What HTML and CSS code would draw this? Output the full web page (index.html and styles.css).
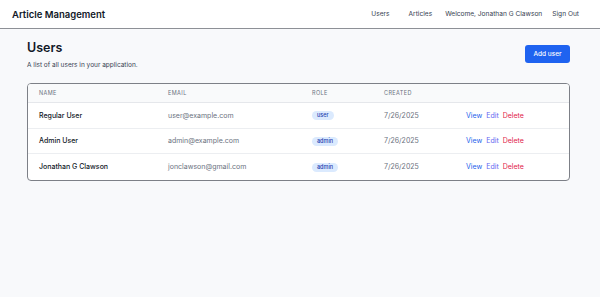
FILE: index.html
```html
<!DOCTYPE html>
<html>
<head>
<meta charset="utf-8">
<link rel="stylesheet" href="styles.css">
</head>
<body>
<header class="topbar">
  <div class="brand">Article Management</div>
  <nav class="nav">
    <a class="nav-link nav-users">Users</a>
    <a class="nav-link nav-articles">Articles</a>
    <span class="nav-welcome">Welcome, Jonathan G Clawson</span>
    <a class="nav-link">Sign Out</a>
  </nav>
</header>
<main class="main">
  <div class="page-head">
    <div>
      <h1 class="title">Users</h1>
      <p class="subtitle">A list of all users in your application.</p>
    </div>
    <button class="add-btn">Add user</button>
  </div>
  <div class="card">
    <div class="row head-row">
      <div>Name</div><div>Email</div><div>Role</div><div>Created</div><div></div>
    </div>
    <div class="row body-row">
      <div class="name">Regular User</div><div class="muted">user@example.com</div><div><span class="badge">user</span></div><div class="muted">7/26/2025</div>
      <div class="actions"><a class="view">View</a><a class="edit">Edit</a><a class="del">Delete</a></div>
    </div>
    <div class="row body-row">
      <div class="name">Admin User</div><div class="muted">admin@example.com</div><div><span class="badge">admin</span></div><div class="muted">7/26/2025</div>
      <div class="actions"><a class="view">View</a><a class="edit">Edit</a><a class="del">Delete</a></div>
    </div>
    <div class="row body-row">
      <div class="name">Jonathan G Clawson</div><div class="muted">jonclawson@gmail.com</div><div><span class="badge">admin</span></div><div class="muted">7/26/2025</div>
      <div class="actions"><a class="view">View</a><a class="edit">Edit</a><a class="del">Delete</a></div>
    </div>
  </div>
</main>
</body>
</html>
```

FILE: styles.css
```css
* { box-sizing: border-box; }
html, body { margin: 0; padding: 0; }
body {
  background: #f8f9fb;
  font-family: Inter, "Noto Sans", sans-serif;
  color: #111827;
  height: 297px;
  overflow: hidden;
}
.topbar {
  height: 29px;
  background: #ffffff;
  border-bottom: 1px solid #8d9096;
  display: flex;
  align-items: center;
  justify-content: space-between;
  padding: 0 21px 0 12px;
}
.brand {
  font-size: 9.5px;
  font-weight: 600;
  color: #111827;
}
.nav {
  display: flex;
  align-items: center;
  font-size: 6.6px;
  color: #374151;
}
.nav-link { color: #374151; }
.nav-users { margin-right: 19px; }
.nav-articles { margin-right: 13px; }
.nav-welcome { margin-right: 10px; }
.main {
  padding: 11px 30px 0 27px;
}
.page-head {
  display: flex;
  justify-content: space-between;
  align-items: flex-start;
}
.title {
  margin: 0;
  font-size: 12.5px;
  font-weight: 600;
  line-height: 16px;
  color: #111827;
}
.subtitle {
  margin: 5px 0 0;
  font-size: 6.5px;
  color: #374151;
  line-height: 9px;
}
.add-btn {
  margin-top: 5px;
  width: 45px;
  height: 18px;
  border: none;
  border-radius: 3px;
  background: #1f63f0;
  color: #fff;
  font-family: inherit;
  font-size: 6.5px;
  font-weight: 500;
  padding: 0;
}
.card {
  margin-top: 13px;
  background: #fff;
  border: 1px solid #7d8087;
  border-radius: 4px;
  overflow: hidden;
}
.row {
  display: grid;
  grid-template-columns: 129px 144px 72px 82px 1fr;
  align-items: center;
  padding-left: 11px;
}
.head-row {
  height: 19px;
  background: #f9fafb;
  border-bottom: 1px solid #e5e7eb;
  font-size: 5.5px;
  letter-spacing: 0.4px;
  text-transform: uppercase;
  color: #6b7280;
}
.body-row {
  height: 25.5px;
  font-size: 7px;
  border-bottom: 1px solid #eceef1;
}
.body-row:last-child { border-bottom: none; }
.name { font-weight: 500; color: #111827; }
.muted { color: #6b7280; }
.badge {
  display: inline-block;
  background: #dbeafe;
  color: #1e40af;
  font-size: 5.5px;
  font-weight: 500;
  padding: 0 5px;
  height: 9px;
  line-height: 9px;
  border-radius: 5px;
}
.actions { display: flex; gap: 4px; }
.view { color: #2563eb; }
.edit { color: #6366f1; }
.del { color: #e11d48; }
```
